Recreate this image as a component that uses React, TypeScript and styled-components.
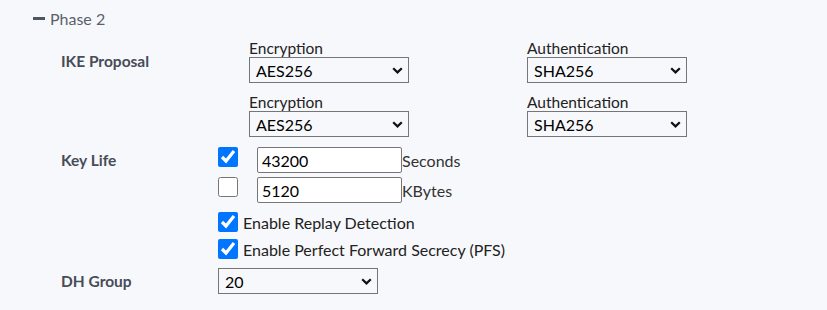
import styled, { createGlobalStyle } from 'styled-components';

const Global = createGlobalStyle`
  body {
    margin: 0;
    background: #f7f8fb;
    font-family: Lato, "Noto Sans", sans-serif;
  }
`;

const Page = styled.div`
  width: 827px;
  height: 310px;
  padding: 8px 0 0 33px;
  box-sizing: border-box;
`;

const Header = styled.div`
  display: flex;
  align-items: center;
  gap: 5px;
  height: 20px;
  font-size: 16px;
  color: #5a606c;
`;

const Minus = styled.span`
  width: 12px;
  height: 3px;
  background: #4f5561;
`;

const Form = styled.div`
  margin: 11px 0 0 28px;
  display: flex;
  flex-direction: column;
`;

const Row = styled.div<{ $gap?: number }>`
  display: flex;
  margin-bottom: ${(p) => p.$gap ?? 0}px;
`;

const Label = styled.div<{ $top?: number }>`
  width: 157px;
  flex-shrink: 0;
  padding-top: ${(p) => p.$top ?? 4}px;
  font-size: 15.5px;
  line-height: 18px;
  font-weight: 700;
  color: #464c58;
`;

const Controls = styled.div`
  display: flex;
  flex-direction: column;
`;

const ProposalGrid = styled.div`
  display: grid;
  grid-template-columns: 278px 160px;
  row-gap: 10px;
  padding-left: 31px;
`;

const Field = styled.div`
  display: flex;
  flex-direction: column;
  font-size: 15.5px;
  line-height: 18px;
  color: #222;
`;

const SelectWrap = styled.span`
  position: relative;
  display: inline-flex;
  width: 160px;
`;

const Select = styled.select`
  appearance: none;
  width: 160px;
  height: 26px;
  font-family: Lato, sans-serif;
  font-size: 16px;
  color: #000;
  background: #f7f8fb;
  border: 1px solid #767676;
  border-radius: 0;
  padding: 0 24px 0 6px;
  margin: 0;
`;

const Chevron = styled.svg`
  position: absolute;
  right: 6px;
  top: 50%;
  margin-top: -3px;
  pointer-events: none;
`;

const LifeRow = styled.div<{ $gap?: number }>`
  display: flex;
  align-items: flex-start;
  margin-bottom: ${(p) => p.$gap ?? 0}px;
`;

const Check = styled.input.attrs({ type: 'checkbox' })`
  width: 20px;
  height: 20px;
  margin: 0;
  flex-shrink: 0;
`;

const TextBox = styled.input`
  width: 145px;
  height: 26px;
  box-sizing: border-box;
  margin: 0 0 0 19px;
  padding: 0 4px;
  border: 1px solid #767676;
  border-radius: 2px;
  background: #fff;
  font-family: Lato, sans-serif;
  font-size: 16px;
  color: #000;
`;

const Unit = styled.span`
  align-self: center;
  font-size: 16px;
  color: #333;
`;

const Option = styled.label<{ $gap?: number }>`
  display: flex;
  align-items: center;
  gap: 5px;
  height: 20px;
  font-size: 16px;
  color: #222;
  margin-bottom: ${(p) => p.$gap ?? 0}px;
`;

function Dropdown({ value, options }: { value: string; options: string[] }) {
  return (
    <SelectWrap>
      <Select defaultValue={value}>
        {options.map((o) => (
          <option key={o}>{o}</option>
        ))}
      </Select>
      <Chevron width="11" height="7" viewBox="0 0 11 7">
        <path d="M1.2 1.2 L5.5 5.4 L9.8 1.2" fill="none" stroke="#111" strokeWidth="2.2" />
      </Chevron>
    </SelectWrap>
  );
}

const proposals = [
  { enc: 'AES256', auth: 'SHA256' },
  { enc: 'AES256', auth: 'SHA256' },
];

export default function App() {
  return (
    <Page>
      <Global />
      <Header>
        <Minus />
        Phase 2
      </Header>
      <Form>
        <Row $gap={10}>
          <Label $top={13}>IKE Proposal</Label>
          <ProposalGrid>
            {proposals.map((p, i) => [
              <Field key={`e${i}`}>
                Encryption
                <Dropdown value={p.enc} options={['AES256', 'AES128', '3DES']} />
              </Field>,
              <Field key={`a${i}`}>
                Authentication
                <Dropdown value={p.auth} options={['SHA256', 'SHA1', 'MD5']} />
              </Field>,
            ])}
          </ProposalGrid>
        </Row>
        <Row $gap={9}>
          <Label>Key Life</Label>
          <Controls>
            <LifeRow $gap={4}>
              <Check defaultChecked />
              <TextBox defaultValue="43200" />
              <Unit>Seconds</Unit>
            </LifeRow>
            <LifeRow>
              <Check />
              <TextBox defaultValue="5120" />
              <Unit>KBytes</Unit>
            </LifeRow>
          </Controls>
        </Row>
        <Row $gap={9}>
          <Label />
          <Controls>
            <Option $gap={7}>
              <Check defaultChecked />
              Enable Replay Detection
            </Option>
            <Option>
              <Check defaultChecked />
              Enable Perfect Forward Secrecy (PFS)
            </Option>
          </Controls>
        </Row>
        <Row>
          <Label>DH Group</Label>
          <Dropdown value="20" options={['20', '14', '5']} />
        </Row>
      </Form>
    </Page>
  );
}
